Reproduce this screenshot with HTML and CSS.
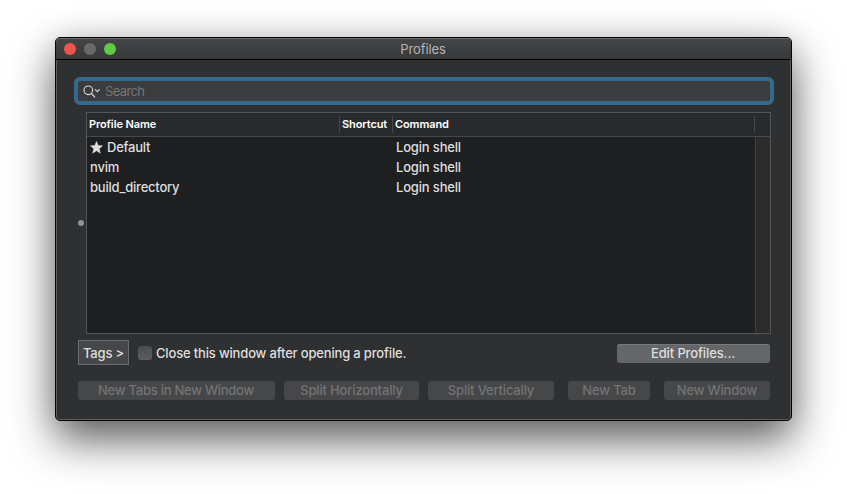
FILE: index.html
```html
<!DOCTYPE html>
<html lang="en">
<head>
<meta charset="utf-8">
<title>Profiles</title>
<link rel="stylesheet" href="styles.css">
</head>
<body>
<main class="window">
  <header class="titlebar">
    <div class="lights"><span class="light close"></span><span class="light minimize"></span><span class="light maximize"></span></div>
    <h1 class="title">Profiles</h1>
  </header>
  <div class="search">
    <svg class="search-icon" width="18" height="13" viewBox="0 0 18 13" fill="none" stroke="#dcdcdc" stroke-width="1.1" stroke-linecap="round"><circle cx="5.3" cy="5.3" r="4.3"/><path d="M8.4 8.5 11.7 12M12.3 4.6l2 2 2-2"/></svg>
    <span class="placeholder">Search</span>
  </div>
  <section class="split">
    <div class="gutter"><span class="handle"></span></div>
    <div class="table">
      <div class="head">
        <span class="th name">Profile Name</span><span class="th shortcut">Shortcut</span><span class="th command">Command</span><span class="th corner"></span>
      </div>
      <div class="body">
        <div class="rows">
          <div class="row"><span class="name"><svg class="star" width="13" height="13" viewBox="0 0 13 13"><path fill="#dfdfdf" stroke="#dfdfdf" stroke-width=".5" d="M6.5.4 8.2 4.6l4.4.2-3.4 2.9 1.2 4.5-3.9-2.5-3.9 2.5 1.2-4.5L.4 4.8l4.4-.2z"/></svg>Default</span><span class="cmd">Login shell</span></div>
          <div class="row"><span class="name">nvim</span><span class="cmd">Login shell</span></div>
          <div class="row"><span class="name">build_directory</span><span class="cmd">Login shell</span></div>
        </div>
        <div class="scroller"></div>
      </div>
    </div>
  </section>
  <div class="options">
    <span class="tags">Tags &gt;</span>
    <span class="checkbox"></span>
    <span class="label">Close this window after opening a profile.</span>
    <span class="button edit">Edit Profiles...</span>
  </div>
  <footer class="actions">
    <span class="button disabled new-tabs">New Tabs in New Window</span>
    <span class="button disabled split-h">Split Horizontally</span>
    <span class="button disabled split-v">Split Vertically</span>
    <span class="button disabled new-tab">New Tab</span>
    <span class="button disabled new-window">New Window</span>
  </footer>
</main>
</body>
</html>
```
FILE: styles.css
```css
* { box-sizing: border-box; }
body {
  margin: 0;
  height: 494px;
  padding: 37px 55px 0;
  overflow: hidden;
  background: #fff;
  font-family: Inter, "Liberation Sans", sans-serif;
  font-size: 13px;
  font-weight: 500;
  letter-spacing: -.17px;
  color: #dfdfdf;
  white-space: nowrap;
}
.window {
  width: 737px;
  height: 384px;
  border: 1px solid #050505;
  border-radius: 5px;
  background: #2f3031;
  box-shadow: inset 0 0 0 1px #5c5d5e, 0 19px 44px rgba(0, 0, 0, .62), 0 0 32px rgba(0, 0, 0, .1);
}
.titlebar {
  display: grid;
  grid-template-columns: 66px 1fr 66px;
  align-items: center;
  height: 22px;
  border-bottom: 1px solid #000;
  border-radius: 4px 4px 0 0;
  background: linear-gradient(#434546, #38393a);
  box-shadow: inset 0 1px #6a6b6c;
}
.lights { display: flex; gap: 8px; padding: 1px 0 0 8px; }
.light { width: 12px; height: 12px; border-radius: 50%; }
.close { background: #f0544d; }
.minimize { background: #69696b; }
.maximize { background: #5fcb43; }
.title {
  margin: 0;
  padding-right: 1px;
  font-size: 13px;
  font-weight: 400;
  letter-spacing: -.1px;
  text-align: center;
  color: #b4b5b6;
}
.search {
  display: flex;
  align-items: center;
  width: 700px;
  height: 28px;
  margin: 17px 0 0 18px;
  padding: 0 0 0 5px;
  border: 4px solid #336a90;
  border-radius: 6px;
  background: #3a3c3d;
}
.search-icon { margin-top: 1px; }
.placeholder { margin: 0 0 1px 4px; font-weight: 400; letter-spacing: -.65px; color: #747677; }
.split { display: flex; margin: 7px 0 0 22px; height: 222px; }
.gutter { display: flex; align-items: center; width: 8px; }
.handle { width: 6px; height: 6px; border-radius: 50%; background: #929394; }
.table { display: flex; flex-direction: column; width: 685px; border: 1px solid #535556; background: #1e1f21; }
.head {
  display: flex;
  align-items: center;
  height: 24px;
  border-bottom: 1px solid #48494b;
  background: #292a2d;
  font-size: 11px;
  font-weight: 600;
  letter-spacing: -.1px;
  color: #fff;
}
.th { height: 17px; line-height: 17px; padding-left: 2px; border-right: 1px solid #46474a; }
.th.name { width: 253px; }
.th.shortcut { width: 53px; }
.th.command { width: 362px; }
.th.corner { flex: 1; border: 0; }
.body { display: flex; flex: 1; }
.rows { flex: 1; }
.row { display: flex; height: 20px; line-height: 21px; }
.row .name { display: flex; align-items: center; width: 306px; padding-left: 3px; letter-spacing: -.22px; }
.star { margin-right: 4px; }
.cmd { padding-left: 3px; }
.scroller { width: 15px; border-left: 1px solid #3f4041; background: #2b2b2c; }
.options { display: flex; align-items: center; height: 25px; margin: 6px 21px 0 22px; }
.tags {
  width: 51px;
  height: 25px;
  border: 1px solid #6b6c6e;
  background: #464749;
  line-height: 25px;
  text-align: center;
}
.checkbox { width: 14px; height: 14px; margin: 1px 4px 0 9px; border-radius: 3px; background: linear-gradient(#4b4c4e, #5c5d5f); }
.button {
  height: 19px;
  border-radius: 3px;
  background: #656668;
  line-height: 18px;
  text-align: center;
}
.edit { width: 153px; margin: 1px 0 0 auto; padding-right: 1px; box-shadow: inset 0 1px #77787a; letter-spacing: -.12px; }
.actions { display: flex; margin: 16px 0 0 22px; }
.disabled { background: #464749; color: #727375; }
.new-tabs { width: 197px; margin-right: 9px; padding-right: 1px; letter-spacing: -.25px; }
.split-h { width: 135px; margin-right: 9px; }
.split-v { width: 126px; margin-right: 14px; }
.new-tab { width: 82px; margin-right: 14px; }
.new-window { width: 106px; }
```
